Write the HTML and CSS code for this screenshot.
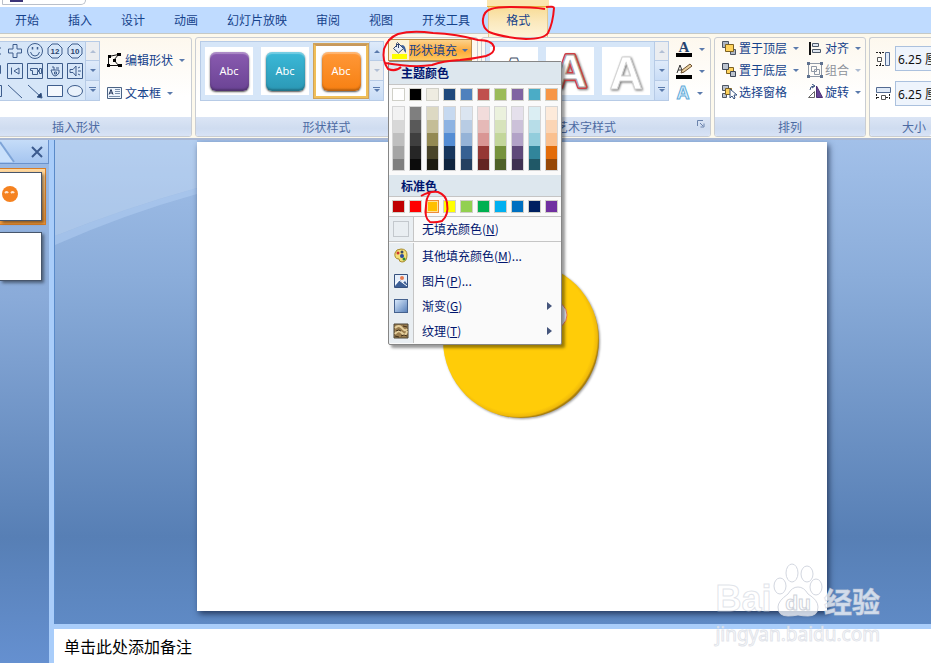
FILE: index.html
```html
<!DOCTYPE html>
<html lang="zh-CN">
<head>
<meta charset="utf-8">
<title>演示文稿</title>
<link rel="stylesheet" href="styles.css">
</head>
<body>
<div class="titlebar"><div class="quickbar"><span class="quickicon"></span></div></div>
<nav class="tabs">
  <a href="#" class="tab">开始</a>
  <a href="#" class="tab">插入</a>
  <a href="#" class="tab">设计</a>
  <a href="#" class="tab">动画</a>
  <a href="#" class="tab">幻灯片放映</a>
  <a href="#" class="tab">审阅</a>
  <a href="#" class="tab">视图</a>
  <a href="#" class="tab">开发工具</a>
  <a href="#" class="tab active">格式</a>
</nav>
<section class="ribbon">
  <div class="group g-insert">
    <div class="body">
      <div class="gallery">
        <div class="shapes">
          <button class="shape"><svg width="20" height="20"><path d="M9 7h7M9 13h7"/></svg></button>
          <button class="shape"><svg width="20" height="20"><path d="M8 3.500h4V8h4.500v4H12v4.500H8V12H3.500V8H8z"/></svg></button>
          <button class="shape"><svg width="20" height="20"><circle cx="10" cy="10" r="7.500"/><path d="M5.500 11q1 4 4.500 4t4.500-4" /><path d="M7.500 6v2.500M12.500 6v2.500" stroke-width="1.500"/></svg></button>
          <button class="shape"><svg width="20" height="20"><path d="M7 3h6l4 4v6l-4 4H7l-4-4V7z"/><text x="10" y="13">12</text></svg></button>
          <button class="shape"><svg width="20" height="20"><path d="M7 3h6l4 4v6l-4 4H7l-4-4V7z"/><text x="10" y="13">10</text></svg></button>
          <button class="shape"><svg width="20" height="20"><path d="M8 4.500h7.500v8q-3 4-7 3"/></svg></button>
          <button class="shape"><svg width="20" height="20"><path d="M2.500 2.500h15v15h-15zM6.500 6.500v7M14 7v6l-5-3z"/></svg></button>
          <button class="shape"><svg width="20" height="20"><path d="M2.500 2.500h15v15h-15zM5.500 7.500h7v2h2v-2h2v5h-2v-2h-2v3h-5v-4h-2z"/></svg></button>
          <button class="shape"><svg width="20" height="20"><path d="M2.500 2.500h15v15h-15zM6 9h8v3q-2 3-4 3t-3-3zM7 6h2v3M11 7h3M9.500 11h2v2h-2z"/></svg></button>
          <button class="shape"><svg width="20" height="20"><path d="M2.500 2.500h15v15h-15zM5 8.500h3L11 5v10l-3-3.500H5zM13 7l2-1M13 10h3M13 13l2 1"/></svg></button>
          <button class="shape"><svg width="20" height="20"><path d="M5 4.500h11.500v11H5"/></svg></button>
          <button class="shape"><svg width="20" height="20"><path d="M3 4l14 13"/></svg></button>
          <button class="shape"><svg width="20" height="20"><path d="M3 4l13 12"/><path class="ink" d="M17 17l-5-1 4-4z"/></svg></button>
          <button class="shape"><svg width="20" height="20"><path d="M2.500 4.500h15v11h-15z" fill="#f4f8fd"/></svg></button>
          <button class="shape"><svg width="20" height="20"><ellipse cx="10" cy="10" rx="7.500" ry="5.500" fill="#eaf2fb"/></svg></button>
        </div>
        <div class="scroll"><button class="off" aria-label="上一行"><i class="up"></i></button><button aria-label="下一行"><i class="down"></i></button><button aria-label="更多"><i class="down more"></i></button></div>
      </div>
      <div class="edits">
        <button class="cmd"><svg width="17" height="16"><path d="M2.500 4.500L12.500 2.500M2.500 4.500v9h10.500M12.500 2.500L8 8l4.500 5.500" fill="none" stroke="#111"/><path d="M2 3h3v3H2zM11 1h4v3h-4zM7 7h3v3H7zM12 12h4v3h-4zM1 12h3v3H1z"/></svg>编辑形状<i class="down"></i></button>
        <button class="cmd"><svg width="17" height="16"><path d="M1.500 2.500h14v11h-14z" fill="#eef5fd" stroke="#4b6384"/><path d="M3 9.500l2-5 2 5M4 8h2" fill="none" stroke="#1c2f55"/><path d="M9 4.500h5M9 6.500h5M9 8.500h5M3 11.500h11" stroke="#7a90ad"/></svg>文本框<i class="down"></i></button>
      </div>
    </div>
    <div class="label">插入形状</div>
  </div>

  <div class="group g-style">
    <div class="body">
      <div class="gallery">
        <div class="cells">
          <button class="cell"><span class="chip purple">Abc</span></button>
          <button class="cell"><span class="chip teal">Abc</span></button>
          <button class="cell chosen"><span class="chip orange">Abc</span></button>
        </div>
        <div class="scroll"><button aria-label="上一行"><i class="up"></i></button><button class="off" aria-label="下一行"><i class="down"></i></button><button aria-label="更多"><i class="down more"></i></button></div>
      </div>
      <div class="fillbox">
        <button class="fill"><svg width="19" height="20"><path d="M3 14h15v5H3z" fill="#ffff00"/><path d="M4.500 8.500l5-5 5 5-5 4.500z" fill="#e9eff8" stroke="#33466e"/><path d="M7.500 7V3.500q1-2 2 0V8" fill="none" stroke="#33466e"/><path d="M12 5q5-1 5 8-2-1-3-5z" fill="#3c5f9c"/></svg><span>形状填充</span><i class="down"></i></button>
        <div class="menu">
          <h3>主题颜色</h3>
          <div class="swatches" id="theme"></div>
          <div class="shades" id="shades"></div>
          <h3 class="second">标准色</h3>
          <div class="swatches" id="standard"></div>
          <button class="item none"><span class="ic"><span class="empty"></span></span><span>无填充颜色(<u>N</u>)</span></button>
          <button class="item first"><span class="ic"><svg width="16" height="16"><path d="M2 5q1-4 6-4 6 0 6 6 0 7-5 7-3 0-3-3-5 0-4-6z" fill="#f3df78" stroke="#a98b2c"/><circle cx="5" cy="5" r="1.500" fill="#c33"/><circle cx="9" cy="4" r="1.500" fill="#3c4a62"/><circle cx="9" cy="8" r="2" fill="#274ba0"/><circle cx="11" cy="11" r="1.500" fill="#2c8a35"/></svg></span><span>其他填充颜色(<u>M</u>)...</span></button>
          <button class="item"><span class="ic"><svg width="16" height="16"><path d="M1.500 1.500h13v13h-13z" fill="#e6effb" stroke="#36517f"/><path d="M2 13l5-6 3 3 2-2 2 3v3H2z" fill="#3d5f96"/><circle cx="9" cy="5" r="2" fill="#e67a51"/><path d="M2 11l4-4 8 6" stroke="#fff" fill="none"/></svg></span><span>图片(<u>P</u>)...</span></button>
          <button class="item"><span class="ic"><span class="grad"></span></span><span>渐变(<u>G</u>)</span><i class="right"></i></button>
          <button class="item"><span class="ic"><svg width="16" height="16"><path d="M1 1h14v14H1z" fill="#9a7d4e" stroke="#4c4638"/><path d="M2 5q4-4 7 0t5 1M2 11q3-5 7-1t5-2" stroke="#e5cf9d" stroke-width="2" fill="none"/><path d="M3 8q3-2 5 0M8 13q3-2 6 0M10 3l4 1M2 13l4 1" stroke="#41301a" stroke-width="1" fill="none"/></svg></span><span>纹理(<u>T</u>)</span><i class="right"></i></button>
        </div>
      </div>
    </div>
    <div class="label launch">形状样式</div>
  </div>

  <div class="group g-art">
    <div class="body">
      <div class="gallery">
        <div class="cells art">
          <button class="cell"><svg width="48" height="48"><text class="wa dark" x="24" y="38">A</text></svg></button>
          <button class="cell"><svg width="48" height="48"><text class="wa red" x="24" y="40">A</text><text class="wa redin" x="24" y="40">A</text></svg></button>
          <button class="cell"><svg width="48" height="48"><text class="wa white" x="24" y="42">A</text></svg></button>
        </div>
        <div class="scroll"><button class="off" aria-label="上一行"><i class="up"></i></button><button aria-label="下一行"><i class="down"></i></button><button aria-label="更多"><i class="down more"></i></button></div>
      </div>
      <div class="textcmds">
        <button class="cmd"><svg width="18" height="18"><text class="ta" x="9" y="12">A</text><path d="M1 13h16v4H1z"/></svg><i class="down"></i></button>
        <button class="cmd"><svg width="18" height="18"><path d="M2 11l3-8 3 8M3 8h4M7 10l2-3" fill="none" stroke="#333"/><path d="M6 11l1-3 8-6 2 2-8 6z" fill="#e9cf9c" stroke="#6d5030"/><path d="M1 13h16v4H1z"/></svg><i class="down"></i></button>
        <button class="cmd glow"><svg width="16" height="18"><text class="tg" x="8" y="15">A</text></svg><i class="down"></i></button>
      </div>
    </div>
    <div class="label launch">艺术字样式<svg class="launcher" width="8" height="8"><path d="M.5 6V.5H6M3 3l3 3M7 3.500V7H3.500" fill="none" stroke="#6b83ac"/></svg></div>
  </div>

  <div class="group g-arrange">
    <div class="body">
      <div class="col">
        <button class="cmd"><svg width="16" height="16"><path d="M1.500 1.500h6v6h-6zM9.500 9.500h5v5h-5z" fill="#aeb6c2" stroke="#4e5663"/><path d="M4.500 4.500h8v7h-8z" fill="#ffd35c" stroke="#7c6122"/></svg>置于顶层<i class="down"></i></button>
        <button class="cmd"><svg width="16" height="16"><path d="M5.500 5.500h7v6h-7z" fill="#ffd35c" stroke="#7c6122"/><path d="M1.500 1.500h6v6h-6zM9.500 9.500h5v5h-5z" fill="#bcc4cf" stroke="#3f4858"/></svg>置于底层<i class="down"></i></button>
        <button class="cmd"><svg width="16" height="16"><path d="M1.500 1.500h6v5h-6zM1.500 9.500h4v4h-4z" fill="#bcc4cf" stroke="#4e5663"/><path d="M4.500 4.500h6v6h-6z" fill="#ffd35c" stroke="#7c6122"/><path d="M9 5v9l2-2 2 3 1-1-1-3h3z" fill="#fff" stroke="#36517f"/></svg>选择窗格</button>
      </div>
      <div class="col">
        <button class="cmd"><svg width="16" height="16"><path d="M3 2v13" stroke="#111" stroke-width="2"/><path d="M5.500 3.500h6v3h-6zM5.500 9.500h8v3h-8z" fill="#dfe6ef" stroke="#4e5a6b"/></svg>对齐<i class="down"></i></button>
        <button class="cmd off"><svg width="16" height="16"><path d="M4.500 4.500h5v5h-5zM7.500 7.500h5v5h-5zM1.500 2v12M14.500 2v12M2 1.500h12M2 14.500h12" fill="none" stroke="#9099a6"/><path d="M0 0h3v3H0zM13 0h3v3h-3zM0 13h3v3H0zM13 13h3v3h-3z" fill="#5f7290"/></svg>组合<i class="down"></i></button>
        <button class="cmd"><svg width="16" height="16"><path d="M1.500 13.500h6v-6z" fill="#fff" stroke="#666"/><path d="M9.500 2v11.500h6z" fill="#674595" stroke="#4b2f74"/><path d="M3 6q0-4 4-4M5 0l3 2-3 2" fill="none" stroke="#334e7d"/></svg>旋转<i class="down"></i></button>
      </div>
    </div>
    <div class="label">排列</div>
  </div>

  <div class="group g-size">
    <div class="body">
      <label><svg width="16" height="18"><path d="M1 2.500h8M1 15.500h8M5.500 2v3M5.500 13v3" stroke="#222" stroke-dasharray="2 1"/><path d="M2.500 7.500h4v4h-4z" fill="#fff" stroke="#555"/><path d="M10.500 2.500h4v13h-4z" fill="#e1ebf8" stroke="#546b91"/></svg><input type="text" value="6.25 厘米" aria-label="高度"></label>
      <label><svg width="16" height="18"><path d="M1.500 2.500h14v5h-14z" fill="#e1ebf8" stroke="#546b91"/><path d="M1.500 9v6M14.500 9v6M2 12.500h3M11 12.500h3" stroke="#222" stroke-dasharray="2 1"/><path d="M6.500 10.500h4v4h-4z" fill="#fff" stroke="#555"/></svg><input type="text" value="6.25 厘米" aria-label="宽度"></label>
    </div>
    <div class="label">大小</div>
  </div>
</section>

<main class="work">
  <aside class="thumbs">
    <div class="panehead"><svg width="16" height="23"><path d="M0 2l14 20H0z" fill="#c9e0fb"/><path d="M0 2l14 20" stroke="#7ea4d8" stroke-width="2"/></svg><button aria-label="关闭"><svg width="12" height="12"><path d="M1 1l10 10M11 1l-10 10" stroke="#3c5b8e" stroke-width="2"/></svg></button></div>
    <div class="thumb sel"><div class="page"><svg width="16" height="16"><circle cx="8" cy="8" r="8" fill="#f58220"/><path d="M3 7q2-2 3 0M9 7q2-2 3 0" stroke="#ffe6cf" fill="none" stroke-width="2"/></svg></div></div>
    <div class="thumb"><div class="page"></div></div>
  </aside>
  <div class="stage">
    <div class="canvas">
      <svg class="swoosh" width="142" height="110"><path d="M0 0h142v48Q70 68 0 96z" fill="#d2e6fa" fill-opacity=".38"/><path d="M0 96Q70 68 142 48v6Q70 74 0 105z" fill="#b4d0f4" fill-opacity=".5"/></svg>
      <div class="slide">
        <svg class="face" width="164" height="166" viewBox="-3 -3 164 166">
          <defs><radialGradient id="disc" cx=".48" cy=".48" r=".52"><stop offset=".93" stop-color="#ffcc08"/><stop offset=".98" stop-color="#efb90a"/><stop offset="1" stop-color="#a77d0c"/></radialGradient></defs>
          <circle cx="79" cy="79" r="78" fill="url(#disc)"/>
          <circle cx="111" cy="54" r="14" fill="#e6e9f2" stroke="#ef7b4a"/>
        </svg>
      </div>
    </div>
    <div class="notes">单击此处添加备注</div>
  </div>
</main>

<svg class="marks" width="180" height="225" viewBox="380 0 180 225">
  <path d="M546 7q8-1 8 1-1 15-6 25-4 6-22 6-25-2-37-7-7-5-6-13 1-8 8-10 6-2 20-2 22 0 34 2"/>
  <path d="M401 67q-5 5-13 2-6-8-4-20 4-11 14-15 14-4 35-1 24 1 45 7 14 0 16 7 1 6-8 9-14 3-26 4-18 1-28 5-18 3-47-2"/>
  <path d="M421 196q9-5 17-4 8 3 9 11 2 12-5 18-7 2-12 1-6-4-4-16 0-8 4-13"/>
</svg>

<div class="watermark" aria-hidden="true">
  <div class="brand"><span class="bai">Bai</span><svg width="50" height="54"><g><ellipse cx="7" cy="23" rx="6" ry="8"/><ellipse cx="19" cy="10" rx="6" ry="9"/><ellipse cx="34" cy="11" rx="6" ry="8"/><ellipse cx="43" cy="24" rx="6" ry="8"/><path d="M25 24q6 0 10 7 10 6 10 13 0 9-10 9-5 0-10-1-5 1-10 1-10 0-10-9 0-6 10-13 4-7 10-7z"/></g><text x="25" y="47">du</text></svg><span class="jy">经验</span></div>
  <div class="site">jingyan.baidu.com</div>
</div>
<script src="script.js"></script>
</body>
</html>
```
FILE: styles.css
```css
* { box-sizing: border-box; }
html, body { margin: 0; height: 100%; overflow: hidden; }
body {
  display: flex; flex-direction: column; position: relative;
  font: 12px/16px "Noto Sans CJK SC", sans-serif;
  color: #15428b; background: #fff;
}
button { font: inherit; color: inherit; background: none; border: 0; padding: 0; margin: 0; white-space: nowrap; }
svg { display: block; flex: none; }
i { display: block; width: 0; height: 0; border: 3px solid transparent; flex: none; }
i.down { border-top-color: #5a7aac; border-bottom: 0; }
i.up { border-bottom-color: #5a7aac; border-top: 0; }
i.right { border: 4px solid transparent; border-left: 5px solid #45557c; border-right: 0; margin-left: auto; margin-right: 9px; }

.titlebar { height: 7px; flex: none; }
.quickbar { width: 84px; height: 5px; margin-left: 2px; padding-left: 7px; border: 1px solid #b9bfc9; border-top: 0; border-radius: 0 0 10px 2px; }
.quickicon { display: block; width: 13px; height: 2px; background: #3b3478; }

.tabs { display: flex; gap: 1px; flex: none; height: 27px; padding-left: 1px; background: #bfdbff; border-bottom: 1px solid #c5c9c6; }
.tab { padding: 5px 14px; color: #15428b; text-decoration: none; }
.tab.active {
  position: relative; margin-left: 3px; padding: 5px 17px; height: 30px; z-index: 3;
  background: linear-gradient(#f8dc96, #fbe9bd 50%, #fdf3d8); border: 1px solid #e3c98d; border-width: 0 1px;
}
.tab.active::before { content: ""; position: absolute; left: -2px; right: -2px; top: -7px; height: 6px; background: #fbe6ae; border-bottom: 1px solid #e8b23c; }

.ribbon { display: flex; gap: 3px; flex: none; height: 106px; padding: 3px 0; background: #fdf9ec; border-bottom: 2px solid #a9b7d3; position: relative; z-index: 2; }
.group { flex: none; display: flex; flex-direction: column; height: 100px; border: 1px solid #c9cdd3; border-radius: 3px; background: linear-gradient(#fdf8ee, #fff 60%); }
.body { display: flex; flex: 1; padding: 3px 4px 0; }
.label { display: flex; align-items: center; justify-content: center; height: 19px; position: relative; color: #4d6ba3; background: linear-gradient(#dbe5f5, #cfdcf0 60%, #d8e3f6); border-radius: 0 0 2px 2px; }
.label.launch { padding-right: 20px; }
.launcher { position: absolute; right: 5px; top: 3px; }
.g-insert { width: 232px; margin-left: -40px; }
.g-insert .body { padding-left: 23px; }
.g-style { width: 283px; }
.g-art { width: 230px; }
.g-art .body { padding-left: 3px; }
.g-arrange { width: 152px; }
.g-size { flex: 1 1 0; min-width: 0; border-right: 0; border-radius: 3px 0 0 3px; }

.gallery { display: flex; flex: none; height: 60px; background: #d6e6f8; border: 1px solid #b7cbe6; }
.shapes { display: grid; grid-template-columns: repeat(5, 20px); grid-auto-rows: 20px; margin-top: -1px; }
.shape svg { fill: none; stroke: #3e5d8c; }
.shape .ink { fill: #2c466f; }
.shape text { font: bold 8px "Liberation Sans", sans-serif; fill: #2c466f; stroke: none; text-anchor: middle; }
.scroll { display: grid; grid-template-rows: repeat(3, 1fr); width: 14px; border-left: 1px solid #b7cbe6; }
.scroll button { display: grid; place-items: center; background: linear-gradient(#dfebfa, #c8dcf6); border-bottom: 1px solid #b7cbe6; position: relative; }
.scroll button:last-child { border-bottom: 0; }
.scroll .off { background: #ebedf0; }
.scroll .off i { opacity: .4; }
.more::before { content: ""; position: absolute; left: 3px; top: 6px; width: 7px; height: 1px; background: #5a7aac; }

.edits { display: flex; flex-direction: column; gap: 17px; padding: 11px 0 0 6px; }
.cmd { display: flex; align-items: center; gap: 2px; height: 16px; }
.cmd i { margin-left: 4px; }
.cmd.off { color: #8d929b; }
.cmd.off i { opacity: .5; }

.cells { display: flex; align-items: center; gap: 8px; padding-left: 4px; }
.cell { width: 48px; height: 48px; background: #fff; display: grid; place-items: center; }
.cell.chosen { width: 56px; height: 56px; margin-left: -4px; border: 3px solid #f0bf58; border-top-color: #c7985c; outline: 1px solid #cfa25a; outline-offset: -1px; }
.art { padding-right: 4px; }
.chip { display: grid; place-items: center; width: 39px; height: 39px; border-radius: 6px; color: #fff; font: 11px/16px "Noto Sans", sans-serif; box-shadow: 0 1px 2px #555, inset 0 2px 1px rgba(255,255,255,.3), inset 0 -2px 2px rgba(0,0,0,.25); }
.purple { background: linear-gradient(#8a5bb0, #6a4394); }
.teal { background: linear-gradient(#3bb9d8, #2b98b5); }
.orange { background: linear-gradient(#ff9838, #f78012); }
.wa { font: bold 46px "Liberation Sans", sans-serif; text-anchor: middle; stroke-linejoin: round; }
.wa.dark { font-size: 38px; fill: #fff; stroke: #47536b; }
.wa.red { fill: #fff; stroke: #cf3f43; stroke-width: 4px; filter: drop-shadow(1px 1px 1px #777); }
.wa.redin { fill: #fff; stroke: #a9a9a9; stroke-width: 1px; }
.wa.white { fill: #fff; stroke: #d5d5d5; filter: drop-shadow(1px 1px 1px #777); }
.textcmds { display: flex; flex-direction: column; gap: 6px; padding: 0 0 0 6px; }
.ta { font: bold 15px "Liberation Serif", serif; fill: #26446f; text-anchor: middle; }
.tg { font: bold 18px "Liberation Sans", sans-serif; fill: #dff2ff; stroke: #62abd8; text-anchor: middle; }

.fillbox { position: relative; margin: -2px 0 0 4px; }
.fill { display: flex; align-items: center; width: 84px; height: 22px; border: 1px solid #b98b45; background: linear-gradient(#fbd28c, #fda938 55%, #ffcb62); }
.fill svg { align-self: stretch; background: #fdf2d6; width: 20px; }
.fill i { margin-left: 5px; border-top-color: #4f6da0; }
.menu { position: absolute; z-index: 3; left: 0; top: 22px; width: 174px; padding-bottom: 1px; background: #fafafa; border: 1px solid #868686; border-radius: 2px; box-shadow: 3px 3px 3px rgba(0,0,0,.4); color: #00156e; }
.menu h3 { margin: 0; height: 23px; padding: 3px 12px; font-size: 12px; line-height: 16px; font-weight: 700; background: #dde7ee; border-bottom: 1px solid #c5c5c5; }
.menu h3.second { height: 22px; margin-top: 4px; }
.swatches, .shades { display: grid; grid-template-columns: repeat(10, 13px); gap: 4px; padding: 3px 2px 3px 3px; }
.swatches button { height: 13px; border: 1px solid #d0d0c8; }
.swatches .picked { border: 2px solid #ef8b38; outline: 1px solid #ffe294; outline-offset: -2px; }
.shades { padding: 2px 2px 0 3px; }
.shade { display: grid; grid-auto-rows: 13px; border: 1px solid #d6d6d6; height: 65px; overflow: hidden; }
.item { display: flex; align-items: center; width: 100%; height: 25px; }
.item > span:nth-child(2) { padding-left: 8px; }
.item.none { border: 1px solid #c5c5c5; border-width: 1px 0; height: 26px; }
.item.first { margin-top: 1px; }
.ic { display: grid; place-items: center; align-self: stretch; width: 25px; background: #e9eef2; border-right: 1px solid #c5c5c5; }
.empty { width: 16px; height: 16px; border: 1px solid #c3c8cd; }
.grad { width: 14px; height: 14px; border: 1px solid #45628f; background: linear-gradient(135deg, #d7e8fb, #5a82bb); }

.g-arrange .body { gap: 8px; padding: 2px 0 0 6px; }
.col { display: flex; flex-direction: column; gap: 6px; }
.g-size .body { flex-direction: column; gap: 10px; padding: 8px 0 0 5px; overflow: hidden; }
.g-size .label { justify-content: flex-start; padding-left: 32px; }
.g-size label { display: flex; align-items: center; gap: 4px; }
.g-size input { flex: 1 1 0; width: 0; min-width: 0; max-width: 70px; height: 25px; padding: 0 0 0 2px; border: 1px solid #abc1de; border-right: 0; background: #eef4fc; font: 12px/16px "Noto Sans", "Noto Sans CJK SC", sans-serif; color: #111; }

.work { display: flex; flex: 1; min-height: 0; }
.thumbs { width: 49px; flex: none; background: linear-gradient(#9dbbe5, #8aabd9 30%, #577fb5 76%, #6590d0); }
.panehead { display: flex; justify-content: space-between; align-items: center; height: 24px; padding-right: 5px; background: linear-gradient(#c5dcf8, #a5c5f0); border: 1px solid #6a92cc; border-width: 0 1px 1px 0; }
.thumb { height: 57px; padding: 4px 4px 4px 0; margin-right: 3px; }
.thumb.sel { margin-top: 4px; border: 1px solid #d97e25; border-left: 0; background: linear-gradient(#ffd9a0, #f29a3b); padding: 3px; padding-left: 0; }
.thumb + .thumb { margin-top: 3px; }
.page { width: 42px; height: 49px; background: #fff; border: 1px solid #47566c; border-left: 0; box-shadow: 2px 2px 3px rgba(0,0,0,.45); padding: 13px 0 0 2px; }
.stage { display: flex; flex-direction: column; flex: 1; min-width: 0; border-left: 5px solid #a9cdfa; }
.canvas { position: relative; display: flex; flex: 1; padding: 2px 104px 13px 142px; background: linear-gradient(#a2c0e9, #8badda 28%, #577fb5 82%, #5f8ac5); border-left: 1px solid #5a8ac8; }
.swoosh { position: absolute; left: 0; top: 0; }
.slide { position: relative; flex: 1; background: #fff; box-shadow: 2px 3px 6px rgba(20,35,65,.75); }
.face { position: absolute; left: 242px; top: 116px; filter: drop-shadow(1px 1px 1px rgba(0,0,0,.4)); }
.notes { flex: none; height: 39px; padding: 5px 10px; border-top: 5px solid #a9cdfa; background: #fff; color: #000; font-size: 16px; line-height: 24px; }

.marks { position: absolute; left: 380px; top: 0; z-index: 5; fill: none; stroke: #f20d18; stroke-width: 2; pointer-events: none; }
.watermark { position: absolute; right: 51px; bottom: 17px; z-index: 4; pointer-events: none; }
.brand { display: flex; align-items: flex-end; justify-content: space-between; height: 54px; margin-bottom: 5px; }
.bai, .jy, .site { color: rgba(255,255,255,.72); -webkit-text-stroke: 1px rgba(205,210,220,.6); }
.bai { font: bold 36px/36px "Liberation Sans", sans-serif; }
.jy { font-size: 28px; line-height: 32px; font-weight: 700; }
.brand g { fill: rgba(255,255,255,.72); stroke: rgba(205,210,220,.9); }
.brand text { font: bold 21px "Liberation Sans", sans-serif; fill: #fff; stroke: #cfd3da; text-anchor: middle; }
.site { font: 19px/24px "Noto Sans", sans-serif; }
```
FILE: script.js
```js
const theme = ["#ffffff", "#000000", "#eeece1", "#1f497d", "#4f81bd", "#c0504d", "#9bbb59", "#8064a2", "#4bacc6", "#f79646"];
const standard = ["#c00000", "#ff0000", "#ffc000", "#ffff00", "#92d050", "#00b050", "#00b0f0", "#0070c0", "#002060", "#7030a0"];
const shades = [
  ["#f2f2f2", "#d8d8d8", "#bfbfbf", "#a5a5a5", "#7f7f7f"],
  ["#7f7f7f", "#595959", "#3f3f3f", "#262626", "#0c0c0c"],
  ["#ddd9c3", "#c4bd97", "#938953", "#494429", "#1d1b10"],
  ["#c6d9f0", "#8db3e2", "#548dd4", "#17365d", "#0f243e"],
  ["#dbe5f1", "#b8cce4", "#95b3d7", "#366092", "#244061"],
  ["#f2dcdb", "#e5b9b7", "#d99694", "#953734", "#632423"],
  ["#ebf1dd", "#d7e3bc", "#c3d69b", "#76923c", "#4f6128"],
  ["#e5e0ec", "#ccc1d9", "#b2a2c7", "#5f497a", "#3f3151"],
  ["#dbeef3", "#b7dde8", "#92cddc", "#31859b", "#205867"],
  ["#fdeada", "#fbd5b5", "#fac08f", "#e36c09", "#974806"]
];

function swatch(color) {
  const b = document.createElement("button");
  b.style.background = color;
  b.setAttribute("aria-label", color);
  return b;
}

for (const c of theme) document.getElementById("theme").append(swatch(c));
for (const c of standard) {
  const b = swatch(c);
  if (c === "#ffc000") b.className = "picked";
  document.getElementById("standard").append(b);
}
for (const list of shades) {
  const col = document.createElement("div");
  col.className = "shade";
  for (const c of list) col.append(swatch(c));
  document.getElementById("shades").append(col);
}
```
